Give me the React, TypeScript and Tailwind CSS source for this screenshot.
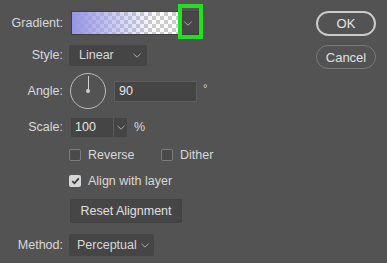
import React from "react";

const Chevron = ({ className = "" }: { className?: string }) => (
  <svg width="8" height="5" viewBox="0 0 8 5" className={className}>
    <path d="M0.5 0.8 L4 4.2 L7.5 0.8" fill="none" stroke="#a8a8a8" strokeWidth="1" />
  </svg>
);

const Label = ({ children }: { children: React.ReactNode }) => (
  <div className="w-[63px] text-right shrink-0">{children}</div>
);

const Box = ({ checked, label }: { checked?: boolean; label: string }) => (
  <div className="flex items-center">
    {checked ? (
      <div className="w-[12px] h-[12px] rounded-[2px] bg-[#d6d6d6] flex items-center justify-center">
        <svg width="9" height="8" viewBox="0 0 9 8">
          <path d="M1.2 4.2 L3.5 6.3 L7.8 1.4" fill="none" stroke="#3a3a3a" strokeWidth="1.8" />
        </svg>
      </div>
    ) : (
      <div className="w-[12px] h-[12px] rounded-[2px] bg-[#4a4a4a] border border-[#7c7c7c]" />
    )}
    <span className="ml-[7px]">{label}</span>
  </div>
);

export default function App() {
  return (
    <div className="relative w-[387px] h-[263px] bg-[#535353] flex text-[12.5px] leading-none text-[#d9d9d9] font-['Liberation_Sans',Arial,sans-serif] overflow-hidden">
      <div className="flex flex-col pt-[11px]">
        {/* Gradient */}
        <div className="flex items-center h-[24px]">
          <Label>Gradient:</Label>
          <div className="ml-[8px] flex h-[24px] w-[128px] border border-[#3f3f3f]">
            <div className="flex-1 [background-image:conic-gradient(#cccccc_25%,#ffffff_0_50%,#cccccc_0_75%,#ffffff_0)] [background-size:8px_8px]">
              <div className="w-full h-full bg-[linear-gradient(to_right,#9595e6,rgba(160,160,235,0.6)_35%,rgba(255,255,255,0)_80%)]" />
            </div>
            <div className="w-[20px] bg-[#474747] flex items-center justify-center">
              <Chevron />
            </div>
          </div>
        </div>
        {/* Style */}
        <div className="flex items-center h-[21px] mt-[10px]">
          <Label>Style:</Label>
          <div className="ml-[6px] w-[78px] h-[21px] bg-[#454545] rounded-[2px] flex items-center pl-[10px] pr-[6px]">
            <span className="flex-1">Linear</span>
            <Chevron />
          </div>
        </div>
        {/* Angle */}
        <div className="flex items-center h-[36px] mt-[7px]">
          <Label>Angle:</Label>
          <div className="ml-[7px] w-[36px] h-[36px] rounded-full border border-[#bdbdbd] relative">
            <div className="absolute left-[16.5px] top-[2px] w-[1px] h-[15px] bg-[#cfcfcf]" />
            <div className="absolute left-[15px] top-[15px] w-[4px] h-[4px] rounded-full bg-[#cfcfcf]" />
          </div>
          <div className="ml-[8px] w-[83px] h-[21px] bg-[#454545] border border-[#5e5e5e] flex items-center pl-[4px] text-[#e6e6e6]">
            90
          </div>
          <span className="ml-[6px] -mt-[6px] text-[11px]">°</span>
        </div>
        {/* Scale */}
        <div className="flex items-center h-[19px] mt-[9px]">
          <Label>Scale:</Label>
          <div className="ml-[8px] w-[56px] h-[19px] bg-[#454545] flex">
            <div className="w-[42px] flex items-center pl-[4px] text-[#e6e6e6]">100</div>
            <div className="w-[1px] bg-[#5a5a5a]" />
            <div className="flex-1 flex items-center justify-center">
              <Chevron />
            </div>
          </div>
          <span className="ml-[7px]">%</span>
        </div>
        {/* Reverse / Dither */}
        <div className="flex items-center h-[12px] mt-[12px] pl-[69px]">
          <div className="w-[92px]">
            <Box label="Reverse" />
          </div>
          <Box label="Dither" />
        </div>
        {/* Align */}
        <div className="flex items-center h-[12px] mt-[14px] pl-[69px]">
          <Box checked label="Align with layer" />
        </div>
        {/* Reset */}
        <div className="flex mt-[12px] pl-[70px]">
          <div className="w-[112px] h-[24px] bg-[#464646] border border-[#424242] rounded-[2px] flex items-center justify-center text-[#e0e0e0]">
            Reset Alignment
          </div>
        </div>
        {/* Method */}
        <div className="flex items-center h-[22px] mt-[11px]">
          <Label>Method:</Label>
          <div className="ml-[6px] w-[85px] h-[22px] bg-[#454545] rounded-[2px] flex items-center pl-[8px] pr-[5px]">
            <span className="flex-1">Perceptual</span>
            <Chevron />
          </div>
        </div>
      </div>

      <div className="ml-auto pr-[11px] pt-[11px] flex flex-col gap-[9px]">
        <div className="w-[60px] h-[25px] rounded-full border-2 border-[#cbcbcb] flex items-center justify-center text-[13px] text-[#e6e6e6]">
          OK
        </div>
        <div className="w-[60px] h-[24px] rounded-full border border-[#7a7a7a] flex items-center justify-center text-[13px] text-[#e0e0e0]">
          Cancel
        </div>
      </div>

      {/* green highlight */}
      <div className="absolute left-[178px] top-[4px] w-[25px] h-[35px] border-[4px] border-[#1fe31f]" />
    </div>
  );
}
